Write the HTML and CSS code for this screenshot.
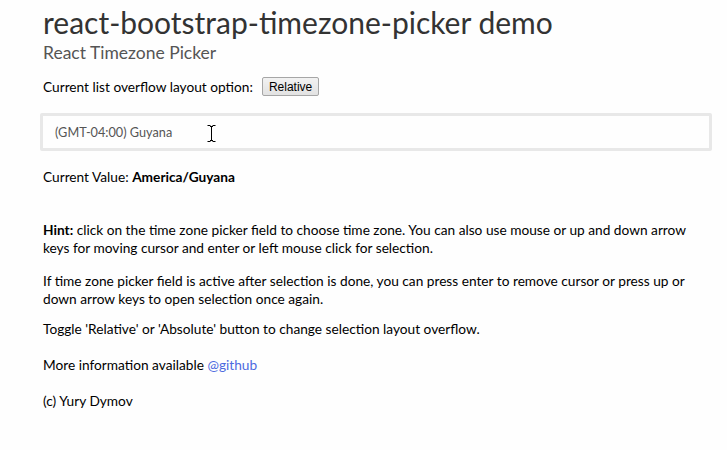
FILE: index.html
```html
<!DOCTYPE html>
<html>
<head>
<meta charset="utf-8">
<link rel="stylesheet" href="styles.css">
</head>
<body>
<div class="page">
  <h1 class="title">react-bootstrap-timezone-picker demo</h1>
  <h2 class="subtitle">React Timezone Picker</h2>
  <div class="option-row">
    <span>Current list overflow layout option:</span>
    <button class="toggle-btn">Relative</button>
  </div>
  <div class="picker">
    <span class="picker-value">(GMT-04:00) Guyana</span>
    <svg class="ibeam" width="9" height="17" viewBox="0 0 9 17">
      <path d="M0.5 0.5h3M5.5 0.5h3M4.5 1v15M0.5 16.5h3M5.5 16.5h3M3 1.5h3M3 15.5h3" stroke="#000" stroke-width="1" fill="none"/>
    </svg>
  </div>
  <p class="current">Current Value: <b>America/Guyana</b></p>
  <p class="hint"><b>Hint:</b> click on the time zone picker field to choose time zone. You can also use mouse or up and down arrow keys for moving cursor and enter or left mouse click for selection.</p>
  <p class="para">If time zone picker field is active after selection is done, you can press enter to remove cursor or press up or down arrow keys to open selection once again.</p>
  <p class="para para-last">Toggle 'Relative' or 'Absolute' button to change selection layout overflow.</p>
  <p class="more">More information available <a href="#" class="link">@github</a></p>
  <p class="more">(c) Yury Dymov</p>
</div>
</body>
</html>
```
FILE: styles.css
```css
html, body {
  margin: 0;
  padding: 0;
  background: #fefefe;
}
body {
  font-family: Lato, "Noto Sans", sans-serif;
  font-size: 13.7px;
  line-height: 18px;
  color: #000;
}
.page {
  width: 657px;
  padding-left: 43px;
}
.title {
  margin: 0;
  padding-top: 4px;
  font-size: 30px;
  line-height: 36px;
  font-weight: normal;
  color: #333;
}
.subtitle {
  margin: 2px 0 0;
  font-size: 17.5px;
  line-height: 22px;
  font-weight: normal;
  color: #555;
}
.option-row {
  margin-top: 13px;
  display: flex;
  align-items: center;
  gap: 9px;
}
.toggle-btn {
  font-family: "Liberation Sans", Arial, sans-serif;
  font-size: 12px;
  height: 19px;
  padding: 0 6px;
  border: 1px solid #a6a6a6;
  border-radius: 2px;
  background: linear-gradient(#f2f2f2, #e2e2e2);
  color: #000;
}
.picker {
  position: relative;
  margin: 17px 0 0 -3px;
  width: 654px;
  height: 32px;
  border: 3px solid #e8e8e8;
  border-radius: 2px;
  display: flex;
  align-items: center;
  padding-left: 12px;
}
.picker-value {
  font-size: 12.7px;
  color: #555;
}
.ibeam {
  position: absolute;
  left: 164px;
  top: 9px;
}
.current {
  margin: 17px 0 0;
}
.hint {
  margin: 35px 0 0;
}
.para {
  margin: 15px 0 0;
}
.para-last {
  margin-top: 12px;
}
.more {
  margin: 18px 0 0;
}
.link {
  color: #4d6ae0;
  text-decoration: none;
}
```
